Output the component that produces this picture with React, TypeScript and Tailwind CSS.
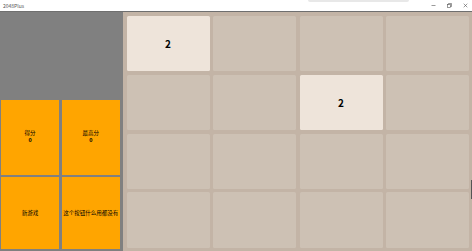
const board = [
  [2, 0, 0, 0],
  [0, 0, 2, 0],
  [0, 0, 0, 0],
  [0, 0, 0, 0],
];

const font = { fontFamily: '"Noto Sans CJK SC", "Noto Sans", sans-serif' };

function TitleBar() {
  return (
    <div className="relative flex h-[12px] shrink-0 items-center justify-between border-b border-[#6f6f6f] bg-white pl-[3px] pr-[4px]">
      <span className="text-[5px] leading-none text-[#555]">2048Plus</span>
      {/* snap hint at the top edge */}
      <div className="absolute left-[308px] top-0 h-[2px] w-[101px] rounded-b-[2px] bg-[#e8e8e8]" />
      <div className="flex items-center gap-[11px] text-[#555]">
        <svg width="5" height="5" viewBox="0 0 5 5">
          <path d="M0.5 2.5h4" stroke="currentColor" strokeWidth="0.6" />
        </svg>
        <svg width="5" height="5" viewBox="0 0 5 5" fill="none" stroke="currentColor" strokeWidth="0.6">
          <rect x="0.5" y="1.5" width="3" height="3" />
          <path d="M1.5 1.5V0.5h3v3h-1" />
        </svg>
        <svg width="5" height="5" viewBox="0 0 5 5" stroke="currentColor" strokeWidth="0.6">
          <path d="M0.7 0.7l3.6 3.6M4.3 0.7l-3.6 3.6" />
        </svg>
      </div>
    </div>
  );
}

function SideButton({ label, value }: { label: string; value?: string }) {
  return (
    <button className="flex flex-col items-center justify-center bg-[#ffa500] text-black">
      <span className="text-[5.5px] leading-[7px]">{label}</span>
      {value !== undefined && <span className="text-[5.5px] font-bold leading-[7px]">{value}</span>}
    </button>
  );
}

export default function App() {
  return (
    <div className="relative flex h-[251px] w-[472px] flex-col overflow-hidden bg-white" style={font}>
      <TitleBar />

      <div className="flex min-h-0 flex-1">
        {/* left panel */}
        <div className="flex w-[123px] shrink-0 flex-col bg-[#808080] pb-[2px] pl-[1px] pr-[3px]">
          <div className="flex-1" />
          <div className="grid grid-cols-2 grid-rows-[75px_72px] gap-[2.5px]">
            <SideButton label="得分" value="0" />
            <SideButton label="最高分" value="0" />
            <SideButton label="新游戏" />
            <SideButton label="这个按钮什么用都没有" />
          </div>
        </div>

        {/* board */}
        <div className="grid flex-1 grid-cols-4 grid-rows-4 gap-[3.5px] bg-[#c3b4a6] p-[3.5px] pr-[3px] pt-[4px]">
          {board.flat().map((v, i) => (
            <div
              key={i}
              className={
                v
                  ? "flex items-center justify-center rounded-[1.5px] bg-[#eee4da] text-[10px] font-bold text-black"
                  : "rounded-[1.5px] bg-[#cdc1b4]"
              }
            >
              {v ? v : null}
            </div>
          ))}
        </div>
      </div>

      {/* window resize grip on the right edge */}
      <div className="absolute right-0 top-[180px] h-[19px] w-[1.5px] bg-[#555]" />
    </div>
  );
}
